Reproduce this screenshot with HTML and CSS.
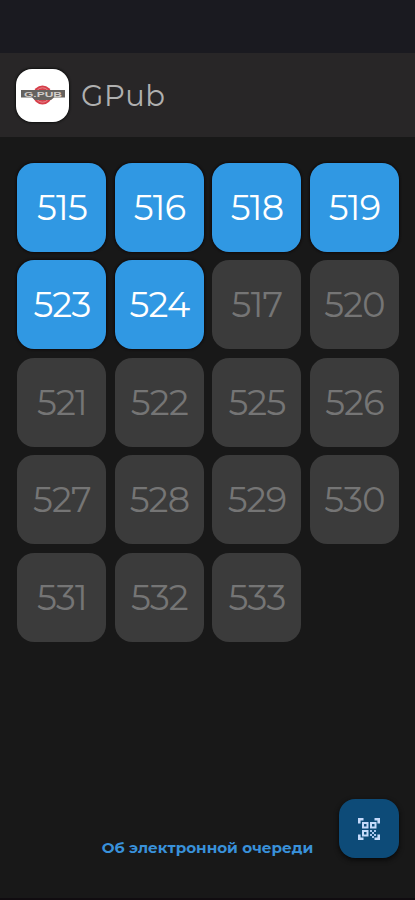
FILE: index.html
```html
<!DOCTYPE html>
<html lang="ru">
<head>
<meta charset="utf-8">
<meta name="viewport" content="width=device-width, initial-scale=1">
<title>GPub</title>
<link rel="stylesheet" href="styles.css">
</head>
<body>
<div class="app">
  <div class="status-bar"></div>
  <header class="header">
    <div class="logo">
      <svg width="46" height="22" viewBox="0 0 46 22">
        <circle cx="22.5" cy="10" r="9.5" fill="#d63f4a"/>
        <circle cx="22.5" cy="10" r="7.2" fill="none" stroke="#e8898e" stroke-width="1"/>
        <path d="M1 5h44v7.500H34l-3 2.500H15l-3-2.500H1z" fill="#65625f"/>
        <text class="logo-text" x="4" y="11.500" textLength="38" lengthAdjust="spacingAndGlyphs">G.PUB</text>
      </svg>
    </div>
    <h1 class="title">GPub</h1>
  </header>
  <main class="orders">
    <div class="order ready">515</div>
    <div class="order ready">516</div>
    <div class="order ready">518</div>
    <div class="order ready">519</div>
    <div class="order ready">523</div>
    <div class="order ready">524</div>
    <div class="order">517</div>
    <div class="order">520</div>
    <div class="order">521</div>
    <div class="order">522</div>
    <div class="order">525</div>
    <div class="order">526</div>
    <div class="order">527</div>
    <div class="order">528</div>
    <div class="order">529</div>
    <div class="order">530</div>
    <div class="order">531</div>
    <div class="order">532</div>
    <div class="order">533</div>
  </main>
  <footer class="footer">
    <a class="about">Об электронной очереди</a>
  </footer>
  <div class="scan">
    <svg width="24" height="24" viewBox="0 0 24 24" fill="none" stroke="#c5dafa" stroke-width="2.6">
      <path d="M2.300 6.500V2.300h4.200M17.500 2.300h4.200v4.200M2.300 17.500v4.200h4.200M17.500 21.700h4.200v-4.200"/>
      <path d="M6 6h4.500v4.500H6zM14 6h4.500v4.500h-4.500zM6 14h4.500v4.500H6z" stroke-width="2"/>
      <path d="M13 13h2v2h-2zM15 15h2v2h-2zM17 13h2v2h-2zM13 17h2v2h-2zM17 17h2v2h-2zM15 19h2v2h-2z" fill="#a9c6ed" stroke="none"/>
    </svg>
  </div>
</div>
</body>
</html>
```
FILE: styles.css
```css
* { box-sizing: border-box; }
body {
  margin: 0;
  background: #181818;
  font-family: Montserrat, Inter, sans-serif;
}
.app {
  height: 900px;
  display: flex;
  flex-direction: column;
  border-bottom: 2px solid #100c10;
  overflow: hidden;
}
.status-bar { height: 53px; background: #1a1a20; }
.header {
  height: 84px;
  padding: 1px 17px 0 16px;
  display: flex;
  align-items: center;
  gap: 12px;
  background: #282627;
}
.logo {
  width: 53px;
  height: 53px;
  display: grid;
  place-items: center;
  background: #fff;
  border-radius: 16px;
  box-shadow: 0 0 2px 1px #111;
}
.logo-text { font: 700 6.5px "Liberation Sans", sans-serif; fill: #d2cdca; }
.title {
  margin: 0;
  font-size: 29px;
  font-weight: 400;
  line-height: 36px;
  letter-spacing: .5px;
  color: #b0b0b0;
}
.orders {
  padding: 25.5px 16.5px 0 17px;
  display: grid;
  grid-template-columns: repeat(4, 1fr);
  grid-auto-rows: 89px;
  gap: 8.5px;
}
.order {
  display: flex;
  align-items: center;
  justify-content: center;
  padding-left: 1px;
  border-radius: 17px;
  background: #3b3b3b;
  color: #757575;
  font-size: 35px;
  font-weight: 400;
  letter-spacing: -.7px;
}
.ready {
  background: #3098e3;
  color: #fff;
  box-shadow: 0 0 2px 1px #100b0b;
}
.footer { margin-top: auto; padding-bottom: 40px; text-align: center; }
.about {
  font-size: 15.2px;
  line-height: 20px;
  font-weight: 700;
  color: #3991da;
}
.scan {
  position: absolute;
  left: 339px;
  top: 799px;
  width: 60px;
  height: 59px;
  display: grid;
  place-items: center;
  border-radius: 16px;
  background: #0d4b78;
  box-shadow: 0 2px 5px #080808;
}
```
